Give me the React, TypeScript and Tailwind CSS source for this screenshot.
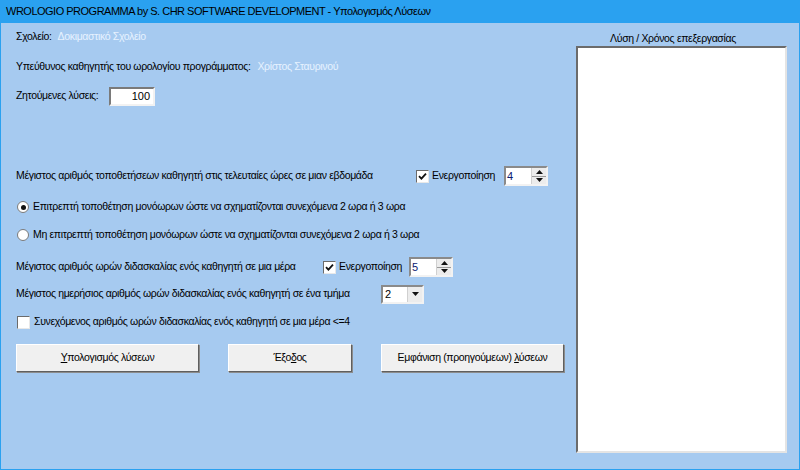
import React from 'react'

const font = { fontFamily: '"Liberation Sans", "DejaVu Sans", sans-serif' }

function CheckBox({ checked }: { checked?: boolean }) {
  return (
    <div className="w-[13px] h-[13px] bg-white border border-t-[#6b6b6b] border-l-[#6b6b6b] border-b-[#e8e8e8] border-r-[#e8e8e8] flex items-center justify-center shrink-0">
      {checked && (
        <svg width="9" height="9" viewBox="0 0 9 9">
          <path d="M1 4.2 L3.4 6.6 L8 1.6" stroke="#111" strokeWidth="1.8" fill="none" />
        </svg>
      )}
    </div>
  )
}

function Radio({ checked }: { checked?: boolean }) {
  return (
    <div className="w-[12px] h-[12px] rounded-full bg-white border border-[#7a7a7a] flex items-center justify-center shrink-0">
      {checked && <div className="w-[5px] h-[5px] rounded-full bg-[#111]" />}
    </div>
  )
}

function Spinner({ value }: { value: string }) {
  return (
    <div className="w-[44px] h-[20px] bg-white border-2 border-t-[#8a8a8a] border-l-[#8a8a8a] border-b-[#f2f2f2] border-r-[#f2f2f2] flex shrink-0">
      <div className="flex-1 pl-[1px] text-[11px] leading-[16px] tracking-normal text-[#0b1a70]">{value}</div>
      <div className="w-[15px] flex flex-col bg-[#ececec] border-l border-[#d0d0d0]">
        <div className="flex-1 flex items-center justify-center border-b border-[#9a9a9a]">
          <svg width="7" height="4" viewBox="0 0 7 4"><path d="M0 4 L3.5 0 L7 4 Z" fill="#111" /></svg>
        </div>
        <div className="flex-1 flex items-center justify-center">
          <svg width="7" height="4" viewBox="0 0 7 4"><path d="M0 0 L3.5 4 L7 0 Z" fill="#111" /></svg>
        </div>
      </div>
    </div>
  )
}

function Dropdown({ value }: { value: string }) {
  return (
    <div className="w-[43px] h-[19px] bg-white border-2 border-t-[#8a8a8a] border-l-[#8a8a8a] border-b-[#f2f2f2] border-r-[#f2f2f2] flex shrink-0">
      <div className="flex-1 pl-[2px] text-[11px] leading-[15px] tracking-normal text-black">{value}</div>
      <div className="w-[15px] bg-[#ececec] border-l border-[#d0d0d0] flex items-center justify-center">
        <svg width="7" height="4" viewBox="0 0 7 4"><path d="M0 0 L3.5 4 L7 0 Z" fill="#111" /></svg>
      </div>
    </div>
  )
}

function Button({ width, children }: { width: string; children: React.ReactNode }) {
  return (
    <div
      className={`${width} h-[28px] bg-[#f0f0f0] border border-t-white border-l-white border-b-[#5f5f5f] border-r-[#5f5f5f] shadow-[1px_1px_0_#8c8c8c] flex items-center justify-center text-black`}
    >
      {children}
    </div>
  )
}

export default function App() {
  return (
    <div className="w-[800px] h-[470px] flex flex-col text-[10.5px] tracking-[-0.35px] text-black" style={font}>
      {/* Title bar */}
      <div className="h-[23px] bg-[#2aa1f0] flex items-center px-[6px] text-[11px] tracking-[-0.5px]">
        WROLOGIO PROGRAMMA by S. CHR SOFTWARE DEVELOPMENT - Υπολογισμός Λύσεων
      </div>

      <div className="flex-1 bg-[#a6caf0] border-x border-b border-[#2aa1f0] flex">
        {/* Left side */}
        <div className="w-[575px] pl-[15px] pt-[4px] flex flex-col">
          <div className="h-[20px] flex items-center">
            <span>Σχολείο:</span>
            <span className="ml-[6px] text-[#e6f2ff]">Δοκιμαστικό Σχολείο</span>
          </div>
          <div className="h-[20px] mt-[10px] flex items-center">
            <span>Υπεύθυνος καθηγητής του ωρολογίου προγράμματος:</span>
            <span className="ml-[7px] text-[#e6f2ff]">Χρίστος Σταυρινού</span>
          </div>
          <div className="h-[20px] mt-[9px] flex items-center">
            <span className="w-[93px]">Ζητούμενες λύσεις:</span>
            <div className="w-[46px] h-[19px] bg-white border-2 border-t-[#7a7a7a] border-l-[#7a7a7a] border-b-[#f2f2f2] border-r-[#f2f2f2] text-right pr-[3px] text-[11px] tracking-normal leading-[15px]">
              100
            </div>
          </div>

          <div className="h-[20px] mt-[60px] flex items-center">
            <span className="w-[400px]">Μέγιστος αριθμός τοποθετήσεων καθηγητή στις τελευταίες ώρες σε μιαν εβδομάδα</span>
            <div className="w-[88px] flex items-center gap-[3px]">
              <CheckBox checked />
              <span>Ενεργοποίηση</span>
            </div>
            <Spinner value="4" />
          </div>

          <div className="h-[20px] mt-[11px] flex items-center gap-[4px] pl-[1px]">
            <Radio checked />
            <span>Επιτρεπτή τοποθέτηση μονόωρων ώστε να σχηματίζονται συνεχόμενα 2 ωρα ή 3 ωρα</span>
          </div>
          <div className="h-[20px] mt-[8px] flex items-center gap-[4px] pl-[1px]">
            <Radio />
            <span>Μη επιτρεπτή τοποθέτηση μονόωρων ώστε να σχηματίζονται συνεχόμενα 2 ωρα ή 3 ωρα</span>
          </div>

          <div className="h-[20px] mt-[12px] flex items-center">
            <span className="w-[307px]">Μέγιστος αριθμός ωρών διδασκαλίας ενός καθηγητή σε μια μέρα</span>
            <div className="w-[86px] flex items-center gap-[3px]">
              <CheckBox checked />
              <span>Ενεργοποίηση</span>
            </div>
            <Spinner value="5" />
          </div>

          <div className="h-[20px] mt-[7px] flex items-center">
            <span className="w-[365px]">Μέγιστος ημερήσιος αριθμός ωρών διδασκαλίας ενός καθηγητή σε ένα τμήμα</span>
            <Dropdown value="2" />
          </div>

          <div className="h-[20px] mt-[8px] flex items-center gap-[4px] pl-[1px]">
            <CheckBox />
            <span>Συνεχόμενος αριθμός ωρών διδασκαλίας ενός καθηγητή σε μια μέρα &lt;=4</span>
          </div>

          <div className="mt-[12px] flex gap-[29px]">
            <Button width="w-[183px]">
              <span><span className="underline">Υ</span>πολογισμός λύσεων</span>
            </Button>
            <Button width="w-[124px]">
              <span>Έξο<span className="underline">δ</span>ος</span>
            </Button>
            <Button width="w-[183px]">
              <span>Εμφάνιση (προηγούμεων) <span className="underline">λ</span>ύσεων</span>
            </Button>
          </div>
        </div>

        {/* Right side */}
        <div className="w-[211px] pt-[7px] flex flex-col">
          <div className="h-[16px] leading-[16px] text-center pr-[17px]">Λύση / Χρόνος επεξεργασίας</div>
          <div className="h-[407px] bg-white border-2 border-t-[#6b6b6b] border-l-[#6b6b6b] border-b-[#e4e4e4] border-r-[#e4e4e4]" />
        </div>
      </div>
    </div>
  )
}
